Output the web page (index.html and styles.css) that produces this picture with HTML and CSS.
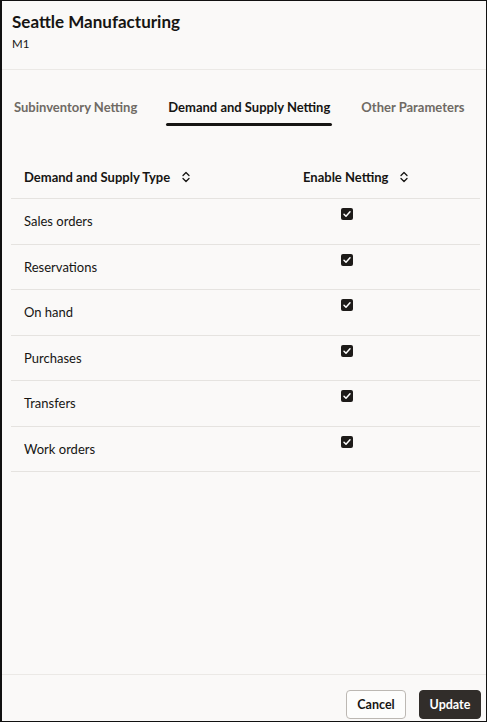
FILE: index.html
```html
<!DOCTYPE html>
<html>
<head>
<meta charset="utf-8">
<link rel="stylesheet" href="styles.css">
</head>
<body>
<div class="frame">
  <header class="head">
    <div class="title">Seattle Manufacturing</div>
    <div class="subtitle">M1</div>
  </header>
  <nav class="tabs">
    <div class="tab">Subinventory Netting</div>
    <div class="tab active">Demand and Supply Netting</div>
    <div class="tab">Other Parameters</div>
  </nav>
  <div class="table">
    <div class="row header">
      <div class="cell"><span>Demand and Supply Type</span><svg class="sort" viewBox="0 0 8 12" width="8" height="12"><path d="M1 4.5 L4 1.5 L7 4.5 M1 7.5 L4 10.5 L7 7.5" fill="none" stroke="#161513" stroke-width="1.3" stroke-linecap="round" stroke-linejoin="round"/></svg></div>
      <div class="cell"><span>Enable Netting</span><svg class="sort" viewBox="0 0 8 12" width="8" height="12"><path d="M1 4.5 L4 1.5 L7 4.5 M1 7.5 L4 10.5 L7 7.5" fill="none" stroke="#161513" stroke-width="1.3" stroke-linecap="round" stroke-linejoin="round"/></svg></div>
    </div>
    <div class="row"><div class="cell">Sales orders</div><div class="cell check-cell"><span class="check"><svg viewBox="0 0 12 12" width="12" height="12"><path d="M3 6.2 L5 8.2 L9 3.8" fill="none" stroke="#fff" stroke-width="1.5" stroke-linecap="round" stroke-linejoin="round"/></svg></span></div></div>
    <div class="row"><div class="cell">Reservations</div><div class="cell check-cell"><span class="check"><svg viewBox="0 0 12 12" width="12" height="12"><path d="M3 6.2 L5 8.2 L9 3.8" fill="none" stroke="#fff" stroke-width="1.5" stroke-linecap="round" stroke-linejoin="round"/></svg></span></div></div>
    <div class="row"><div class="cell">On hand</div><div class="cell check-cell"><span class="check"><svg viewBox="0 0 12 12" width="12" height="12"><path d="M3 6.2 L5 8.2 L9 3.8" fill="none" stroke="#fff" stroke-width="1.5" stroke-linecap="round" stroke-linejoin="round"/></svg></span></div></div>
    <div class="row"><div class="cell">Purchases</div><div class="cell check-cell"><span class="check"><svg viewBox="0 0 12 12" width="12" height="12"><path d="M3 6.2 L5 8.2 L9 3.8" fill="none" stroke="#fff" stroke-width="1.5" stroke-linecap="round" stroke-linejoin="round"/></svg></span></div></div>
    <div class="row"><div class="cell">Transfers</div><div class="cell check-cell"><span class="check"><svg viewBox="0 0 12 12" width="12" height="12"><path d="M3 6.2 L5 8.2 L9 3.8" fill="none" stroke="#fff" stroke-width="1.5" stroke-linecap="round" stroke-linejoin="round"/></svg></span></div></div>
    <div class="row"><div class="cell">Work orders</div><div class="cell check-cell"><span class="check"><svg viewBox="0 0 12 12" width="12" height="12"><path d="M3 6.2 L5 8.2 L9 3.8" fill="none" stroke="#fff" stroke-width="1.5" stroke-linecap="round" stroke-linejoin="round"/></svg></span></div></div>
  </div>
  <div class="spacer"></div>
  <footer class="foot">
    <button class="btn cancel">Cancel</button>
    <button class="btn update">Update</button>
  </footer>
</div>
</body>
</html>
```
FILE: styles.css
```css
* { box-sizing: border-box; }
html, body { margin: 0; padding: 0; }
body {
  font-family: Lato, "Noto Sans", sans-serif;
  color: #161513;
  background: #faf9f8;
}
.frame {
  width: 487px;
  height: 722px;
  border: 1px solid #111;
  border-left-width: 2px;
  background: #faf9f8;
  display: flex;
  flex-direction: column;
}
.head {
  padding: 10px 0 0 10px;
  height: 69px;
  border-bottom: 1px solid #ebe9e6;
}
.title {
  font-size: 17px;
  font-weight: 700;
  line-height: 22px;
}
.subtitle {
  font-size: 11.5px;
  line-height: 16px;
  margin-top: 3px;
}
.tabs {
  display: flex;
  padding-left: 11px;
  margin-top: 25px;
  gap: 28px;
  white-space: nowrap;
}
.tab {
  font-size: 13px;
  font-weight: 700;
  color: #6f6a64;
  height: 31px;
  line-height: 24px;
  padding: 0 1px;
}
.tab.active {
  color: #161513;
  position: relative;
  padding: 0 2px;
}
.tab.active::after {
  content: "";
  position: absolute;
  left: 0;
  right: 0;
  bottom: 0;
  height: 3px;
  border-radius: 2px;
  background: #161513;
}
.table {
  margin: 33px 6px 0 9px;
}
.row {
  display: grid;
  grid-template-columns: 280px 1fr;
  height: 45.5px;
  border-bottom: 1px solid #e5e3e0;
  font-size: 13px;
}
.row.header {
  height: 40px;
  font-weight: 700;
}
.row.header .cell { padding-bottom: 3px; }
.cell {
  padding-left: 13px;
  display: flex;
  align-items: center;
  gap: 12px;
}
.row.header .cell:nth-child(2) { padding-left: 12px; }
.check-cell {
  align-items: flex-start;
  padding-top: 9px;
  padding-left: 50px;
}
.check {
  width: 12px;
  height: 12px;
  border-radius: 2px;
  background: #1d1b19;
  display: block;
}
.check svg { display: block; }
.sort { display: block; }
.spacer { flex: 1; }
.foot {
  border-top: 1px solid #ebe9e6;
  height: 47px;
  display: flex;
  justify-content: flex-end;
  align-items: flex-end;
  gap: 13px;
  padding: 0 5px 2px 0;
}
.btn {
  font-family: inherit;
  font-size: 12.5px;
  font-weight: 700;
  height: 29px;
  border-radius: 4px;
  padding: 0;
  cursor: pointer;
}
.cancel {
  width: 60px;
  background: #fdfdfc;
  border: 1px solid #bcb8b3;
  color: #161513;
}
.update {
  width: 62px;
  background: #312d2a;
  border: 1px solid #312d2a;
  color: #fff;
}
```
